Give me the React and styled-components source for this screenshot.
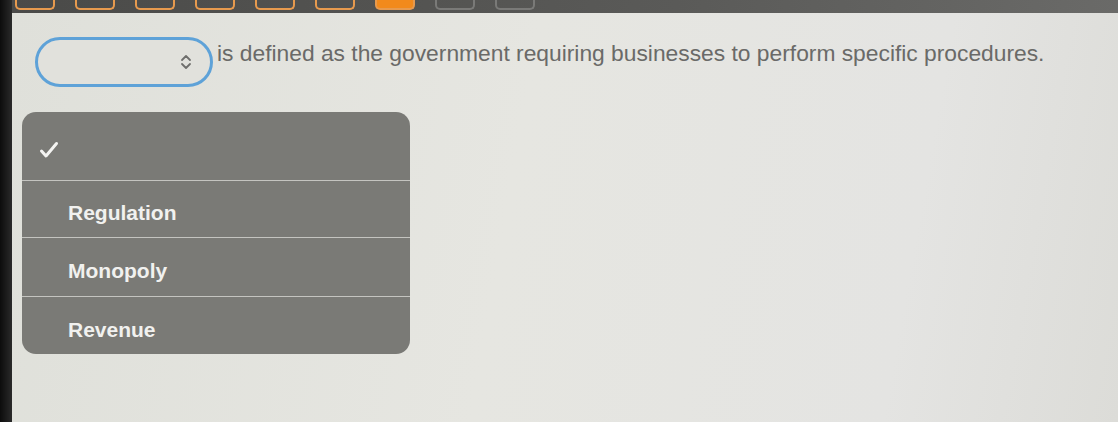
import React from "react";
import styled, { createGlobalStyle } from "styled-components";

const GlobalStyle = createGlobalStyle`
  html, body {
    margin: 0;
    padding: 0;
    width: 1118px;
    height: 422px;
    overflow: hidden;
    background: #111;
  }
  body {
    font-family: "Liberation Sans", Arial, sans-serif;
  }
`;

const Screen = styled.div`
  display: flex;
  width: 1118px;
  height: 422px;
`;

const Bezel = styled.div`
  width: 12px;
  flex-shrink: 0;
  background: linear-gradient(to right, #0c0c0c, #2a2a2a);
`;

const Display = styled.div`
  flex: 1;
  display: flex;
  flex-direction: column;
`;

const TabBar = styled.div`
  display: flex;
  gap: 20px;
  height: 13px;
  padding-left: 3px;
  background: linear-gradient(to right, #4a4a48, #5a5a58 60%, #6a6a68);
  flex-shrink: 0;
`;

const Tab = styled.div`
  width: 40px;
  height: 10px;
  box-sizing: border-box;
  border: 2px solid ${(p) => (p.$muted ? "#7a7a78" : "#e79a4e")};
  border-top: none;
  border-radius: 0 0 5px 5px;
  background: ${(p) => (p.$active ? "#f28a1c" : "transparent")};
`;

const Content = styled.main`
  flex: 1;
  padding: 24px 0 0 10px;
  background: linear-gradient(100deg, #dfe0da 0%, #e6e6e1 45%, #e4e4e2 80%, #dcdcd8 100%);
`;

const QuestionRow = styled.div`
  display: flex;
  align-items: center;
  padding-left: 13px;
`;

const Select = styled.div`
  display: flex;
  align-items: center;
  justify-content: flex-end;
  width: 178px;
  height: 50px;
  box-sizing: border-box;
  padding-right: 18px;
  border: 3px solid #5ea2d8;
  border-radius: 25px;
  background: #e1e1dc;
  flex-shrink: 0;
`;

const Sentence = styled.p`
  margin: 0 0 18px 4px;
  font-size: 22.8px;
  color: #6a6a68;
  white-space: nowrap;
`;

const Menu = styled.ul`
  list-style: none;
  margin: 25px 0 0 0;
  padding: 0;
  width: 388px;
  border-radius: 14px;
  background: #7a7a76;
  overflow: hidden;
`;

const MenuItem = styled.li`
  display: flex;
  align-items: center;
  box-sizing: border-box;
  height: ${(p) => p.$h}px;
  padding: 8px 0 0 ${(p) => (p.$checked ? 17 : 46)}px;
  border-top: ${(p) => (p.$first ? "none" : "1px solid #c4c4c0")};
  font-size: 21px;
  font-weight: bold;
  color: #f1f1ef;
`;

const Chevrons = () => (
  <svg width="12" height="16" viewBox="0 0 12 16" fill="none" stroke="#6e6e6c" strokeWidth="1.8" strokeLinecap="round" strokeLinejoin="round">
    <path d="M2 6 L6 2 L10 6" />
    <path d="M2 10 L6 14 L10 10" />
  </svg>
);

const Check = () => (
  <svg width="20" height="18" viewBox="0 0 20 18" fill="none" stroke="#f4f4f2" strokeWidth="3" strokeLinecap="round" strokeLinejoin="round">
    <path d="M2.5 10 L7 15 L17.5 2.5" />
  </svg>
);

const options = ["Regulation", "Monopoly", "Revenue"];
const heights = [57, 59, 58];

const App = () => {
  return (
    <>
      <GlobalStyle />
      <Screen>
        <Bezel />
        <Display>
          <TabBar>
            <Tab />
            <Tab />
            <Tab />
            <Tab />
            <Tab />
            <Tab />
            <Tab $active />
            <Tab $muted />
            <Tab $muted />
          </TabBar>
          <Content>
            <QuestionRow>
              <Select>
                <Chevrons />
              </Select>
              <Sentence>
                is defined as the government requiring businesses to perform specific procedures.
              </Sentence>
            </QuestionRow>
            <Menu>
              <MenuItem $first $checked $h={68}>
                <Check />
              </MenuItem>
              {options.map((o, i) => (
                <MenuItem key={o} $h={heights[i]}>
                  {o}
                </MenuItem>
              ))}
            </Menu>
          </Content>
        </Display>
      </Screen>
    </>
  );
};

export default App;
